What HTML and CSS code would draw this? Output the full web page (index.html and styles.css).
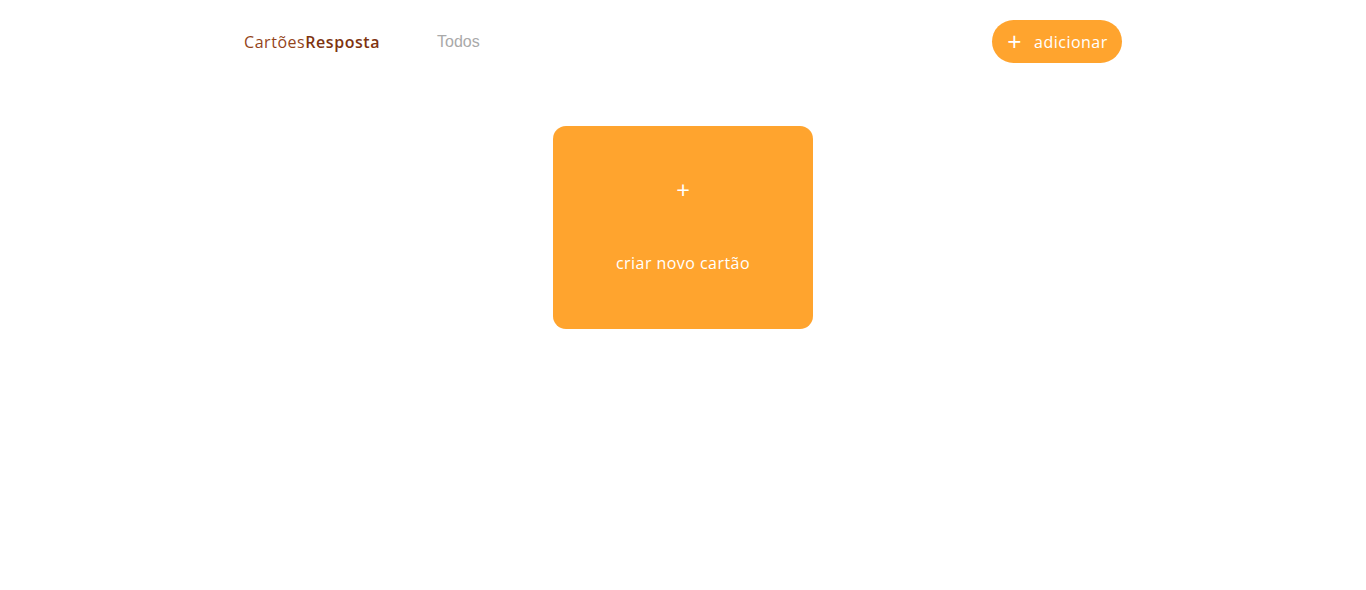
FILE: index.html
```html
<!DOCTYPE html>
<html lang="pt">
<head>
<meta charset="utf-8">
<title>CartõesResposta</title>
<link rel="stylesheet" href="styles.css">
</head>
<body>
<header class="header">
  <div class="header-left">
    <a class="logo" href="#"><span class="logo-light">Cartões</span><span class="logo-bold">Resposta</span></a>
    <a class="nav-link" href="#">Todos</a>
  </div>
  <button class="add-btn" type="button"><span class="add-plus">+</span><span class="add-label">adicionar</span></button>
</header>
<main class="main">
  <div class="new-card">
    <span class="new-card-plus">+</span>
    <span class="new-card-label">criar novo cartão</span>
  </div>
</main>
</body>
</html>
```
FILE: styles.css
```css
* { box-sizing: border-box; }
html, body { margin: 0; padding: 0; background: #fff; }
body { font-family: "Open Sans", "Noto Sans", sans-serif; }

.header {
  width: 878px;
  margin: 0 auto;
  padding-top: 20px;
  display: flex;
  align-items: center;
  justify-content: space-between;
}
.header-left { display: flex; align-items: center; gap: 57px; }
.logo { text-decoration: none; font-size: 16px; color: #8a3a12; letter-spacing: 0.55px; }
.logo-light { font-weight: 400; color: #94441a; }
.logo-bold { font-weight: 600; color: #7e3310; }
.nav-link {
  font-family: "Liberation Sans", Arial, sans-serif;
  font-size: 16px;
  color: #a9a9a9;
  text-decoration: none;
}
.add-btn {
  height: 43px;
  width: 130px;
  border: none;
  border-radius: 22px;
  background: #ffa42e;
  color: #fff;
  font-family: inherit;
  font-size: 16px;
  display: flex;
  align-items: center;
  padding: 0 0 0 11px;
  cursor: pointer;
}
.add-plus { font-size: 25px; line-height: 1; width: 23px; margin-right: 8px; font-weight: 400; }
.add-label { letter-spacing: 0.5px; }

.main { display: flex; justify-content: center; padding-top: 63px; }
.new-card {
  width: 260px;
  height: 203px;
  background: #ffa42e;
  border-radius: 13px;
  display: flex;
  flex-direction: column;
  align-items: center;
  padding-top: 50px;
  color: #fff;
}
.new-card-plus { font-size: 24px; line-height: 28px; }
.new-card-label { font-size: 16px; margin-top: 48px; letter-spacing: 0.45px; }
```
